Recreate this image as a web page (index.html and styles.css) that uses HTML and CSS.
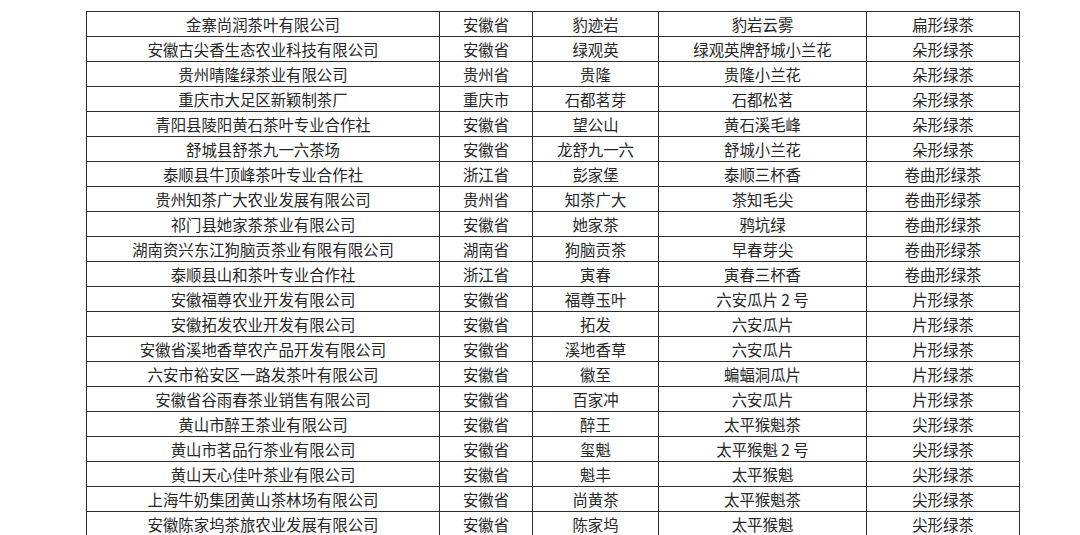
FILE: index.html
```html
<!DOCTYPE html>
<html lang="zh-CN">
<head>
<meta charset="utf-8">
<title>绿茶企业名单</title>
<link rel="stylesheet" href="styles.css">
</head>
<body>
<table class="list">
  <colgroup>
    <col class="c-company"><col class="c-prov"><col class="c-brand"><col class="c-product"><col class="c-type">
  </colgroup>
  <tbody>
    <tr><td>金寨尚润茶叶有限公司</td><td>安徽省</td><td>豹迹岩</td><td>豹岩云雾</td><td>扁形绿茶</td></tr>
    <tr><td>安徽古尖香生态农业科技有限公司</td><td>安徽省</td><td>绿观英</td><td>绿观英牌舒城小兰花</td><td>朵形绿茶</td></tr>
    <tr><td>贵州晴隆绿茶业有限公司</td><td>贵州省</td><td>贵隆</td><td>贵隆小兰花</td><td>朵形绿茶</td></tr>
    <tr><td>重庆市大足区新颖制茶厂</td><td>重庆市</td><td>石都茗芽</td><td>石都松茗</td><td>朵形绿茶</td></tr>
    <tr><td>青阳县陵阳黄石茶叶专业合作社</td><td>安徽省</td><td>望公山</td><td>黄石溪毛峰</td><td>朵形绿茶</td></tr>
    <tr><td>舒城县舒茶九一六茶场</td><td>安徽省</td><td>龙舒九一六</td><td>舒城小兰花</td><td>朵形绿茶</td></tr>
    <tr><td>泰顺县牛顶峰茶叶专业合作社</td><td>浙江省</td><td>彭家堡</td><td>泰顺三杯香</td><td>卷曲形绿茶</td></tr>
    <tr><td>贵州知茶广大农业发展有限公司</td><td>贵州省</td><td>知茶广大</td><td>茶知毛尖</td><td>卷曲形绿茶</td></tr>
    <tr><td>祁门县她家茶茶业有限公司</td><td>安徽省</td><td>她家茶</td><td>鸦坑绿</td><td>卷曲形绿茶</td></tr>
    <tr><td>湖南资兴东江狗脑贡茶业有限有限公司</td><td>湖南省</td><td>狗脑贡茶</td><td>早春芽尖</td><td>卷曲形绿茶</td></tr>
    <tr><td>泰顺县山和茶叶专业合作社</td><td>浙江省</td><td>寅春</td><td>寅春三杯香</td><td>卷曲形绿茶</td></tr>
    <tr><td>安徽福尊农业开发有限公司</td><td>安徽省</td><td>福尊玉叶</td><td>六安瓜片 2 号</td><td>片形绿茶</td></tr>
    <tr><td>安徽拓发农业开发有限公司</td><td>安徽省</td><td>拓发</td><td>六安瓜片</td><td>片形绿茶</td></tr>
    <tr><td>安徽省溪地香草农产品开发有限公司</td><td>安徽省</td><td>溪地香草</td><td>六安瓜片</td><td>片形绿茶</td></tr>
    <tr><td>六安市裕安区一路发茶叶有限公司</td><td>安徽省</td><td>徽至</td><td>蝙蝠洞瓜片</td><td>片形绿茶</td></tr>
    <tr><td>安徽省谷雨春茶业销售有限公司</td><td>安徽省</td><td>百家冲</td><td>六安瓜片</td><td>片形绿茶</td></tr>
    <tr><td>黄山市醉王茶业有限公司</td><td>安徽省</td><td>醉王</td><td>太平猴魁茶</td><td>尖形绿茶</td></tr>
    <tr><td>黄山市茗品行茶业有限公司</td><td>安徽省</td><td>玺魁</td><td>太平猴魁 2 号</td><td>尖形绿茶</td></tr>
    <tr><td>黄山天心佳叶茶业有限公司</td><td>安徽省</td><td>魁丰</td><td>太平猴魁</td><td>尖形绿茶</td></tr>
    <tr><td>上海牛奶集团黄山茶林场有限公司</td><td>安徽省</td><td>尚黄茶</td><td>太平猴魁茶</td><td>尖形绿茶</td></tr>
    <tr><td>安徽陈家坞茶旅农业发展有限公司</td><td>安徽省</td><td>陈家坞</td><td>太平猴魁</td><td>尖形绿茶</td></tr>
  </tbody>
</table>
</body>
</html>
```

FILE: styles.css
```css
html, body {
  margin: 0;
  padding: 0;
  background: #ffffff;
  overflow: hidden;
}

body {
  padding: 11px 0 0 86px;
  font-family: "Noto Sans CJK SC", "Liberation Sans", sans-serif;
  font-size: 15.4px;
  color: #262626;
}

.list {
  border-collapse: collapse;
  table-layout: fixed;
  width: 933px;
}

.c-company { width: 353px; }
.c-prov { width: 93px; }
.c-brand { width: 126px; }
.c-product { width: 208px; }
.c-type { width: 153px; }

.list td {
  border: 1px solid #2e2e2e;
  height: 24px;
  padding: 0;
  text-align: center;
  vertical-align: middle;
  line-height: 24px;
  white-space: nowrap;
  box-sizing: border-box;
}
```
